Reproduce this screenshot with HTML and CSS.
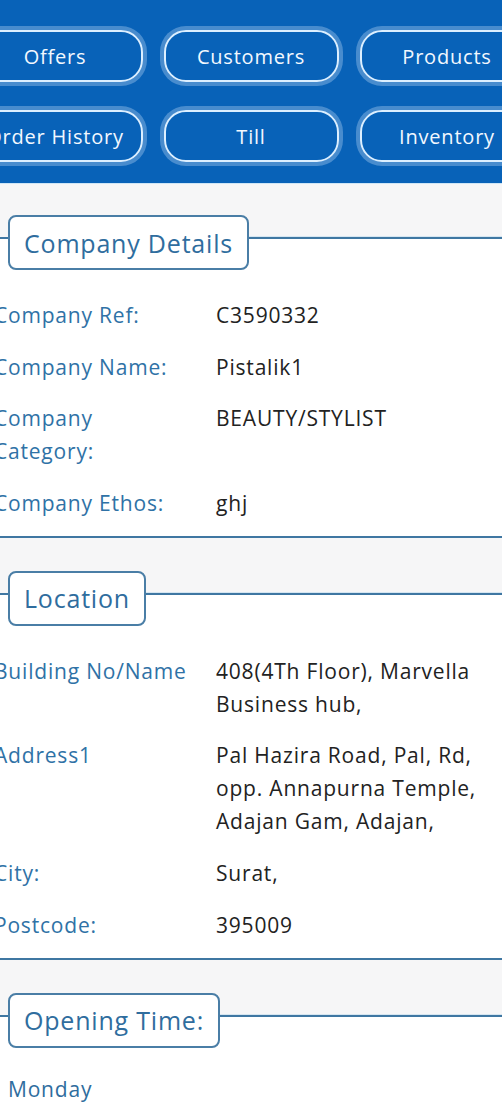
FILE: index.html
```html
<!DOCTYPE html>
<html lang="en">
<head>
<meta charset="utf-8">
<title>Company Details</title>
<link rel="stylesheet" href="styles.css">
</head>
<body>
<div class="page">
  <nav class="header">
    <div class="btn-row">
      <a class="btn">Offers</a>
      <a class="btn">Customers</a>
      <a class="btn">Products</a>
    </div>
    <div class="btn-row">
      <a class="btn">Order History</a>
      <a class="btn">Till</a>
      <a class="btn">Inventory</a>
    </div>
  </nav>

  <section class="sec sec-first">
    <div class="sec-head">
      <span class="stub"></span>
      <h2 class="legend">Company Details</h2>
      <span class="rule"></span>
    </div>
    <div class="sec-body">
      <div class="row"><div class="lbl">Company Ref:</div><div class="val">C3590332</div></div>
      <div class="row"><div class="lbl">Company Name:</div><div class="val">Pistalik1</div></div>
      <div class="row"><div class="lbl">Company<br>Category:</div><div class="val">BEAUTY/STYLIST</div></div>
      <div class="row"><div class="lbl">Company Ethos:</div><div class="val">ghj</div></div>
    </div>
  </section>

  <section class="sec">
    <div class="sec-head">
      <span class="stub"></span>
      <h2 class="legend">Location</h2>
      <span class="rule"></span>
    </div>
    <div class="sec-body">
      <div class="row"><div class="lbl">Building No/Name</div><div class="val">408(4Th Floor), Marvella<br>Business hub,</div></div>
      <div class="row"><div class="lbl">Address1</div><div class="val">Pal Hazira Road, Pal, Rd,<br>opp. Annapurna Temple,<br>Adajan Gam, Adajan,</div></div>
      <div class="row"><div class="lbl">City:</div><div class="val">Surat,</div></div>
      <div class="row"><div class="lbl">Postcode:</div><div class="val">395009</div></div>
    </div>
  </section>

  <section class="sec">
    <div class="sec-head">
      <span class="stub"></span>
      <h2 class="legend">Opening Time:</h2>
      <span class="rule"></span>
    </div>
    <div class="sec-body open">
      <div class="day">Monday</div>
    </div>
  </section>
</div>
</body>
</html>
```

FILE: styles.css
```css
html, body {
  margin: 0;
  padding: 0;
  background: #ffffff;
}
body {
  font-family: "Open Sans", Lato, sans-serif;
  overflow-x: hidden;
}
.page {
  width: 502px;
  overflow: hidden;
}
.header {
  background: #0862b8;
  height: 184px;
  box-sizing: border-box;
  padding-top: 30px;
  display: flex;
  flex-direction: column;
  gap: 28px;
  border-bottom: 1px solid #cfe6f6;
}
.btn-row {
  display: flex;
  justify-content: center;
  gap: 21px;
}
.btn {
  flex: 0 0 175px;
  height: 52px;
  box-sizing: border-box;
  border: 2px solid #dcefff;
  border-radius: 22px;
  box-shadow: 0 0 0 4px rgba(170, 205, 240, 0.4);
  color: #f2f8ff;
  font-size: 20px;
  letter-spacing: 0.8px;
  display: flex;
  align-items: center;
  justify-content: center;
  white-space: nowrap;
}
.sec-head {
  display: flex;
  align-items: flex-start;
  padding-top: 33px;
  background: linear-gradient(#f6f6f7 0, #f6f6f7 55px, #ffffff 55px);
}
.sec-first .sec-head {
  padding-top: 31px;
  background: linear-gradient(#f6f6f7 0, #f6f6f7 53px, #ffffff 53px);
}
.stub {
  flex: 0 0 8px;
  height: 2px;
  margin-top: 22px;
  background: #3f77a2;
}
.rule {
  flex: 1 1 auto;
  height: 2px;
  margin-top: 22px;
  background: #3f77a2;
  box-shadow: 0 -1px 0 #d6e6f1;
}
.legend {
  margin: 0;
  height: 55px;
  box-sizing: border-box;
  border: 2px solid #4a7ea6;
  border-radius: 8px;
  background: #ffffff;
  padding: 0 14px;
  display: flex;
  align-items: center;
  font-size: 25px;
  font-weight: 400;
  letter-spacing: 0.8px;
  color: #2f6d9e;
  white-space: nowrap;
}
.sec-body {
  padding: 29px 0 16px;
  display: flex;
  flex-direction: column;
  gap: 18.6px;
  border-bottom: 2px solid #3f77a2;
  box-shadow: 0 2px 0 #cfe6f6;
}
.sec-body.open {
  border-bottom: none;
  box-shadow: none;
  padding-top: 25px;
}
.row {
  display: flex;
  margin-left: -6px;
  font-size: 21px;
  letter-spacing: 0.8px;
  line-height: 33px;
}
.lbl {
  flex: 0 0 222px;
  color: #2f72a6;
}
.val {
  color: #222222;
  white-space: nowrap;
}
.day {
  padding-left: 8px;
  font-size: 21px;
  letter-spacing: 0.8px;
  line-height: 33px;
  color: #2f6d9e;
}
```
